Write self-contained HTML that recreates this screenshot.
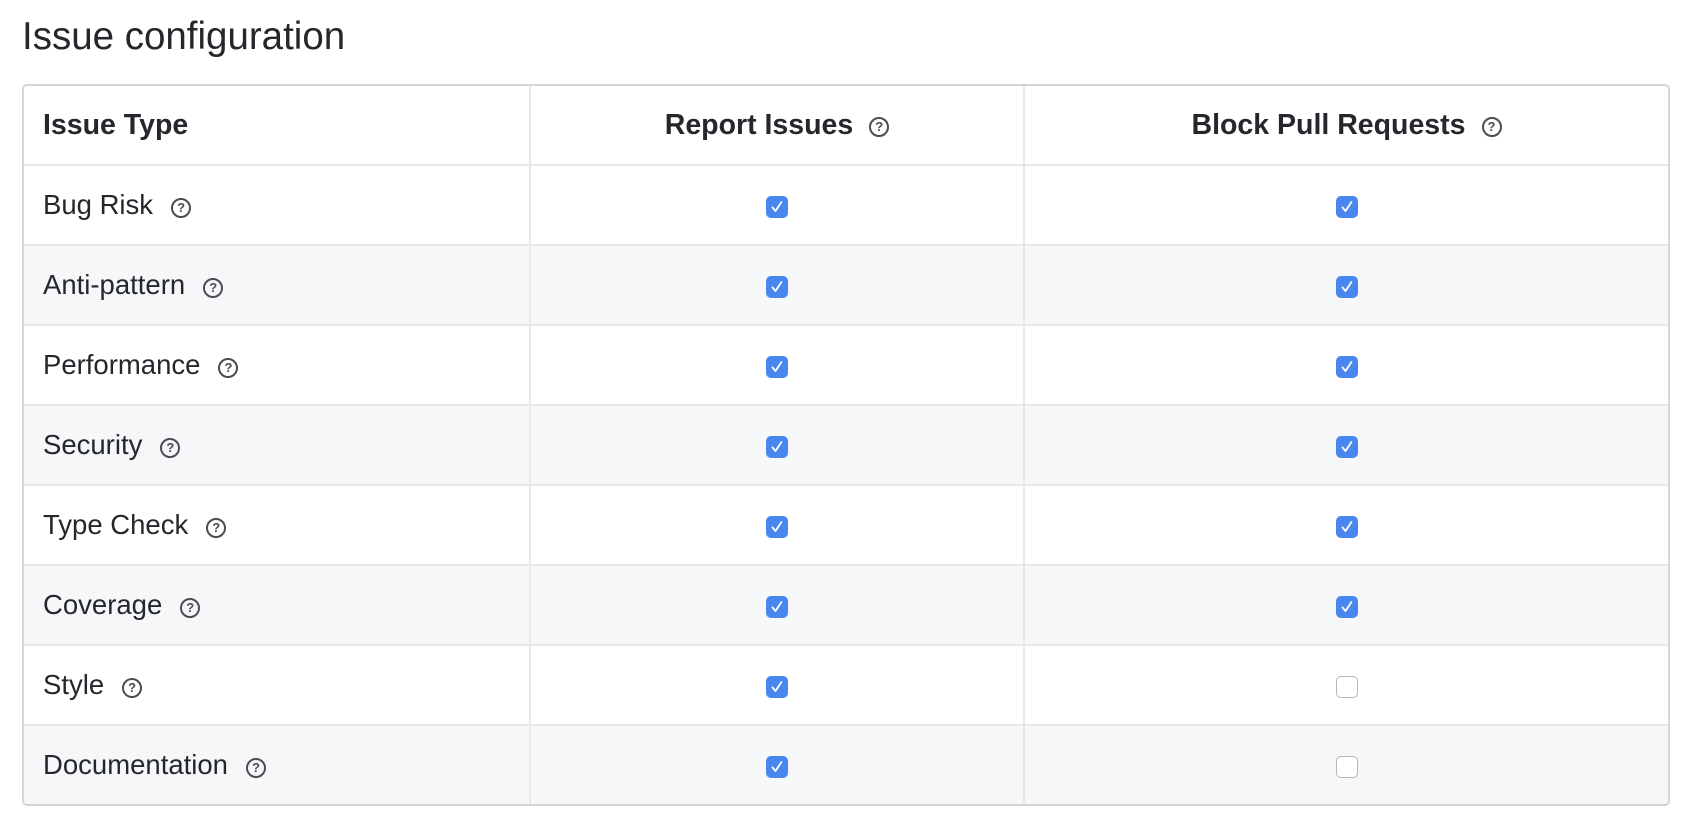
<!DOCTYPE html>
<html><head><meta charset="utf-8"><style>
body{margin:0;background:#fff;font-family:"Liberation Sans",Arial,sans-serif;color:#24272b;width:1696px;height:836px;overflow:hidden}
h1{position:absolute;left:22px;top:15px;margin:0;font-weight:normal;font-size:38.5px;color:#24272b}
table{position:absolute;left:22px;top:84px;width:1648px;border-collapse:separate;border-spacing:0;border:2px solid #d3d5d9;border-radius:5px;overflow:hidden}
td,th{height:78px;border-bottom:2px solid #e6e8eb;border-right:2px solid #e6e8eb;padding:0;font-size:27.5px}
tr:last-child td{border-bottom:none}
td:last-child,th:last-child{border-right:none}
th{font-size:28.5px;font-weight:bold;text-align:center}
th:first-child,td:first-child{text-align:left;padding-left:19px}
tr:nth-child(odd) td{background:#f6f7f9}
.c1{width:486px}.c2{width:492px}
td.cb{text-align:center}
.q{display:inline-block;width:16px;height:16px;border:2px solid #4a4d52;border-radius:50%;font-size:13px;line-height:16px;text-align:center;font-weight:bold;color:#4a4d52;vertical-align:middle;margin-left:18px;position:relative;top:1px}
th .q{margin-left:16px}
.ch{display:inline-block;width:22px;height:22px;border-radius:5px;background:#4a86f0;vertical-align:middle;position:relative}
.ch svg{position:absolute;left:3px;top:3px}
.un{display:inline-block;width:20px;height:20px;border-radius:5px;border:1px solid #b5b7ba;background:#fff;vertical-align:middle}
</style></head><body>
<h1>Issue configuration</h1>
<table>
<tr><th class="c1" style="background:#fff">Issue Type</th><th class="c2" style="background:#fff">Report Issues<span class="q">?</span></th><th style="background:#fff">Block Pull Requests<span class="q">?</span></th></tr>
<tr><td>Bug Risk<span class="q">?</span></td><td class="cb"><span class="ch"><svg width="16" height="16" viewBox="0 0 16 16"><path d="M3.5 8.5l3 3.5 6-9" stroke="#fff" stroke-width="1.8" fill="none" stroke-linecap="round" stroke-linejoin="round"/></svg></span></td><td class="cb"><span class="ch"><svg width="16" height="16" viewBox="0 0 16 16"><path d="M3.5 8.5l3 3.5 6-9" stroke="#fff" stroke-width="1.8" fill="none" stroke-linecap="round" stroke-linejoin="round"/></svg></span></td></tr>
<tr><td>Anti-pattern<span class="q">?</span></td><td class="cb"><span class="ch"><svg width="16" height="16" viewBox="0 0 16 16"><path d="M3.5 8.5l3 3.5 6-9" stroke="#fff" stroke-width="1.8" fill="none" stroke-linecap="round" stroke-linejoin="round"/></svg></span></td><td class="cb"><span class="ch"><svg width="16" height="16" viewBox="0 0 16 16"><path d="M3.5 8.5l3 3.5 6-9" stroke="#fff" stroke-width="1.8" fill="none" stroke-linecap="round" stroke-linejoin="round"/></svg></span></td></tr>
<tr><td>Performance<span class="q">?</span></td><td class="cb"><span class="ch"><svg width="16" height="16" viewBox="0 0 16 16"><path d="M3.5 8.5l3 3.5 6-9" stroke="#fff" stroke-width="1.8" fill="none" stroke-linecap="round" stroke-linejoin="round"/></svg></span></td><td class="cb"><span class="ch"><svg width="16" height="16" viewBox="0 0 16 16"><path d="M3.5 8.5l3 3.5 6-9" stroke="#fff" stroke-width="1.8" fill="none" stroke-linecap="round" stroke-linejoin="round"/></svg></span></td></tr>
<tr><td>Security<span class="q">?</span></td><td class="cb"><span class="ch"><svg width="16" height="16" viewBox="0 0 16 16"><path d="M3.5 8.5l3 3.5 6-9" stroke="#fff" stroke-width="1.8" fill="none" stroke-linecap="round" stroke-linejoin="round"/></svg></span></td><td class="cb"><span class="ch"><svg width="16" height="16" viewBox="0 0 16 16"><path d="M3.5 8.5l3 3.5 6-9" stroke="#fff" stroke-width="1.8" fill="none" stroke-linecap="round" stroke-linejoin="round"/></svg></span></td></tr>
<tr><td>Type Check<span class="q">?</span></td><td class="cb"><span class="ch"><svg width="16" height="16" viewBox="0 0 16 16"><path d="M3.5 8.5l3 3.5 6-9" stroke="#fff" stroke-width="1.8" fill="none" stroke-linecap="round" stroke-linejoin="round"/></svg></span></td><td class="cb"><span class="ch"><svg width="16" height="16" viewBox="0 0 16 16"><path d="M3.5 8.5l3 3.5 6-9" stroke="#fff" stroke-width="1.8" fill="none" stroke-linecap="round" stroke-linejoin="round"/></svg></span></td></tr>
<tr><td>Coverage<span class="q">?</span></td><td class="cb"><span class="ch"><svg width="16" height="16" viewBox="0 0 16 16"><path d="M3.5 8.5l3 3.5 6-9" stroke="#fff" stroke-width="1.8" fill="none" stroke-linecap="round" stroke-linejoin="round"/></svg></span></td><td class="cb"><span class="ch"><svg width="16" height="16" viewBox="0 0 16 16"><path d="M3.5 8.5l3 3.5 6-9" stroke="#fff" stroke-width="1.8" fill="none" stroke-linecap="round" stroke-linejoin="round"/></svg></span></td></tr>
<tr><td>Style<span class="q">?</span></td><td class="cb"><span class="ch"><svg width="16" height="16" viewBox="0 0 16 16"><path d="M3.5 8.5l3 3.5 6-9" stroke="#fff" stroke-width="1.8" fill="none" stroke-linecap="round" stroke-linejoin="round"/></svg></span></td><td class="cb"><span class="un"></span></td></tr>
<tr><td>Documentation<span class="q">?</span></td><td class="cb"><span class="ch"><svg width="16" height="16" viewBox="0 0 16 16"><path d="M3.5 8.5l3 3.5 6-9" stroke="#fff" stroke-width="1.8" fill="none" stroke-linecap="round" stroke-linejoin="round"/></svg></span></td><td class="cb"><span class="un"></span></td></tr>
</table>
</body></html>
